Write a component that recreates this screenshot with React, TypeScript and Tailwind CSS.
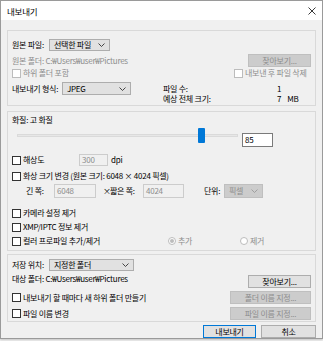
import React from 'react'

const font = { fontFamily: '"Noto Sans CJK KR", "Liberation Sans", sans-serif' }

function Chevron({ color = '#333' }: { color?: string }) {
    return (
        <svg width="7" height="4" viewBox="0 0 7 4" className="shrink-0">
            <path d="M0.5 0.5 L3.5 3.5 L6.5 0.5" fill="none" stroke={color} strokeWidth="0.9" />
        </svg>
    )
}

function Select({ label, w, h = 12, disabled = false }: { label: string; w: string; h?: number; disabled?: boolean }) {
    return (
        <div
            className={`${w} shrink-0 flex items-center justify-between pl-[4px] pr-[4px] border ${
                disabled ? 'bg-[#cccccc] border-[#bfbfbf] text-[#8d8d8d]' : 'bg-[#e1e1e1] border-[#adadad] text-black'
            }`}
            style={{ height: h }}
        >
            <span>{label}</span>
            <Chevron color={disabled ? '#9a9a9a' : '#333'} />
        </div>
    )
}

function Check({ label, disabled = false }: { label: string; disabled?: boolean }) {
    return (
        <div className="flex items-center gap-[2px]">
            <div className={`w-[9px] h-[9px] shrink-0 bg-white border ${disabled ? 'border-[#bcbcbc]' : 'border-[#333333]'}`} />
            <span className={disabled ? 'text-[#8d8d8d]' : 'text-black'}>{label}</span>
        </div>
    )
}

function Btn({ label, w, disabled = false, primary = false }: { label: string; w: string; disabled?: boolean; primary?: boolean }) {
    return (
        <div
            className={`${w} h-[13px] shrink-0 flex items-center justify-center border ${
                disabled
                    ? 'bg-[#cccccc] border-[#bfbfbf] text-[#8d8d8d]'
                    : primary
                    ? 'bg-[#e1e1e1] border-[#0078d7] text-black'
                    : 'bg-[#e1e1e1] border-[#adadad] text-black'
            }`}
        >
            {label}
        </div>
    )
}

function Radio({ label, checked = false }: { label: string; checked?: boolean }) {
    return (
        <div className="flex items-center gap-[2px]">
            <div className="w-[8px] h-[8px] rounded-full border border-[#bcbcbc] bg-white flex items-center justify-center">
                {checked && <div className="w-[4px] h-[4px] rounded-full bg-[#bcbcbc]" />}
            </div>
            <span className="text-[#8d8d8d]">{label}</span>
        </div>
    )
}

export default function App() {
    return (
        <div className="w-[323px] h-[341px] bg-[#f4f4f4] text-[8px] leading-[10px] tracking-[-0.25px] whitespace-nowrap text-black" style={font}>
            <div className="w-[323px] h-[339px] border border-[#9a9a9a] bg-[#f0f0f0] flex flex-col shadow-[0_1px_2px_rgba(0,0,0,0.2)]">
                {/* Title bar */}
                <div className="h-[19px] bg-white flex items-center justify-between pl-[6px] pr-[6px] shrink-0">
                    <span className="text-[8.5px]">내보내기</span>
                    <svg width="8" height="8" viewBox="0 0 8 8">
                        <path d="M0.5 0.5 L7.5 7.5 M7.5 0.5 L0.5 7.5" stroke="#222" strokeWidth="0.9" />
                    </svg>
                </div>

                {/* Source group */}
                <div className="ml-[6px] mt-[10px] w-[309px] h-[76px] border border-[#d9d9d9] flex flex-col pl-[4px] pr-[4px] shrink-0">
                    <div className="mt-[8px] h-[12px] flex items-center">
                        <span className="w-[37px] shrink-0">원본 파일:</span>
                        <Select label="선택한 파일" w="w-[61px]" />
                    </div>
                    <div className="mt-[3px] h-[13px] flex items-center">
                        <span className="text-[#8d8d8d]">원본 폴더: C:₩Users₩user₩Pictures</span>
                        <div className="ml-auto">
                            <Btn label="찾아보기..." w="w-[63px]" disabled />
                        </div>
                    </div>
                    <div className="h-[12px] flex items-center">
                        <div className="w-[222px] shrink-0">
                            <Check label="하위 폴더 포함" disabled />
                        </div>
                        <Check label="내보낸 후 파일 삭제" disabled />
                    </div>
                    <div className="mt-[3px] flex items-start">
                        <span className="w-[50px] h-[13px] shrink-0 flex items-center">내보내기 형식:</span>
                        <Select label="JPEG" w="w-[69px]" h={13} />
                        <div className="ml-[32px] mt-[2px] flex flex-col">
                            <div className="flex h-[10px]">
                                <span className="w-[114px] shrink-0">파일 수:</span>
                                <span>1</span>
                            </div>
                            <div className="flex h-[10px]">
                                <span className="w-[114px] shrink-0">예상 전체 크기:</span>
                                <span>7</span>
                                <span className="ml-[6px]">MB</span>
                            </div>
                        </div>
                    </div>
                </div>

                {/* Quality group */}
                <div className="ml-[6px] mt-[5px] w-[309px] h-[140px] border border-[#d9d9d9] flex flex-col pl-[4px] pr-[4px] shrink-0">
                    <div className="mt-[3px] h-[10px]">화질: 고 화질</div>
                    <div className="mt-[3px] h-[19px] flex items-start pl-[5px]">
                        <div className="relative w-[221px] h-[19px] shrink-0">
                            <div className="absolute left-0 right-0 top-[6px] h-[3px] bg-[#e7e7e7] border border-[#dadada]" />
                            <div className="absolute left-[181px] top-0 w-[7px] h-[15px] bg-[#0078d7] rounded-[1px]" />
                        </div>
                        <div className="ml-[4px] mt-[5px] w-[31px] h-[14px] bg-white border border-[#7a7a7a] flex items-center pl-[2px]">85</div>
                    </div>
                    <div className="mt-[7px] h-[12px] flex items-center">
                        <div className="w-[67px] shrink-0">
                            <Check label="해상도" />
                        </div>
                        <div className="w-[29px] h-[12px] shrink-0 border border-[#cccccc] flex items-center pl-[2px] text-[#8d8d8d]">300</div>
                        <span className="ml-[3px]">dpi</span>
                    </div>
                    <div className="mt-[4px] h-[12px] flex items-center">
                        <Check label="화상 크기 변경 (원본 크기: 6048 × 4024 픽셀)" />
                    </div>
                    <div className="mt-[1px] h-[15px] flex items-center pl-[14px]">
                        <span className="w-[28px] shrink-0">긴 쪽:</span>
                        <div className="w-[42px] h-[14px] shrink-0 border border-[#cccccc] flex items-center pl-[2px] text-[#8d8d8d]">6048</div>
                        <span className="ml-[7px] w-[5px] shrink-0">×</span>
                        <span className="ml-[2px] w-[33px] shrink-0">짧은 쪽:</span>
                        <div className="w-[41px] h-[14px] shrink-0 border border-[#cccccc] flex items-center pl-[2px] text-[#8d8d8d]">4024</div>
                        <span className="ml-[20px] w-[20px] shrink-0">단위:</span>
                        <Select label="픽셀" w="w-[39px]" h={14} disabled />
                    </div>
                    <div className="mt-[9px] h-[12px] flex items-center">
                        <Check label="카메라 설정 제거" />
                    </div>
                    <div className="mt-[2px] h-[12px] flex items-center">
                        <Check label="XMP/IPTC 정보 제거" />
                    </div>
                    <div className="mt-[2px] h-[12px] flex items-center">
                        <div className="w-[156px] shrink-0">
                            <Check label="컬러 프로파일 추가/제거" />
                        </div>
                        <div className="w-[72px] shrink-0">
                            <Radio label="추가" checked />
                        </div>
                        <Radio label="제거" />
                    </div>
                </div>

                {/* Destination group */}
                <div className="ml-[6px] mt-[3px] w-[309px] h-[68px] border border-[#d9d9d9] flex flex-col pl-[4px] pr-[4px] shrink-0">
                    <div className="mt-[4px] h-[12px] flex items-center">
                        <span className="w-[37px] shrink-0">저장 위치:</span>
                        <Select label="지정한 폴더" w="w-[85px]" />
                    </div>
                    <div className="mt-[4px] h-[13px] flex items-start">
                        <span className="mt-[-1px]">대상 폴더: C:₩Users₩user₩Pictures</span>
                        <div className="ml-auto">
                            <Btn label="찾아보기..." w="w-[63px]" />
                        </div>
                    </div>
                    <div className="mt-[3px] h-[13px] flex items-center">
                        <Check label="내보내기 할 때마다 새 하위 폴더 만들기" />
                        <div className="ml-auto">
                            <Btn label="폴더 이름 지정..." w="w-[81px]" disabled />
                        </div>
                    </div>
                    <div className="mt-[3px] h-[13px] flex items-center">
                        <Check label="파일 이름 변경" />
                        <div className="ml-auto">
                            <Btn label="파일 이름 지정..." w="w-[81px]" disabled />
                        </div>
                    </div>
                </div>

                {/* Footer buttons */}
                <div className="mt-[3px] flex justify-end gap-[5px] pr-[6px]">
                    <Btn label="내보내기" w="w-[53px]" primary />
                    <Btn label="취소" w="w-[55px]" />
                </div>
            </div>
        </div>
    )
}
